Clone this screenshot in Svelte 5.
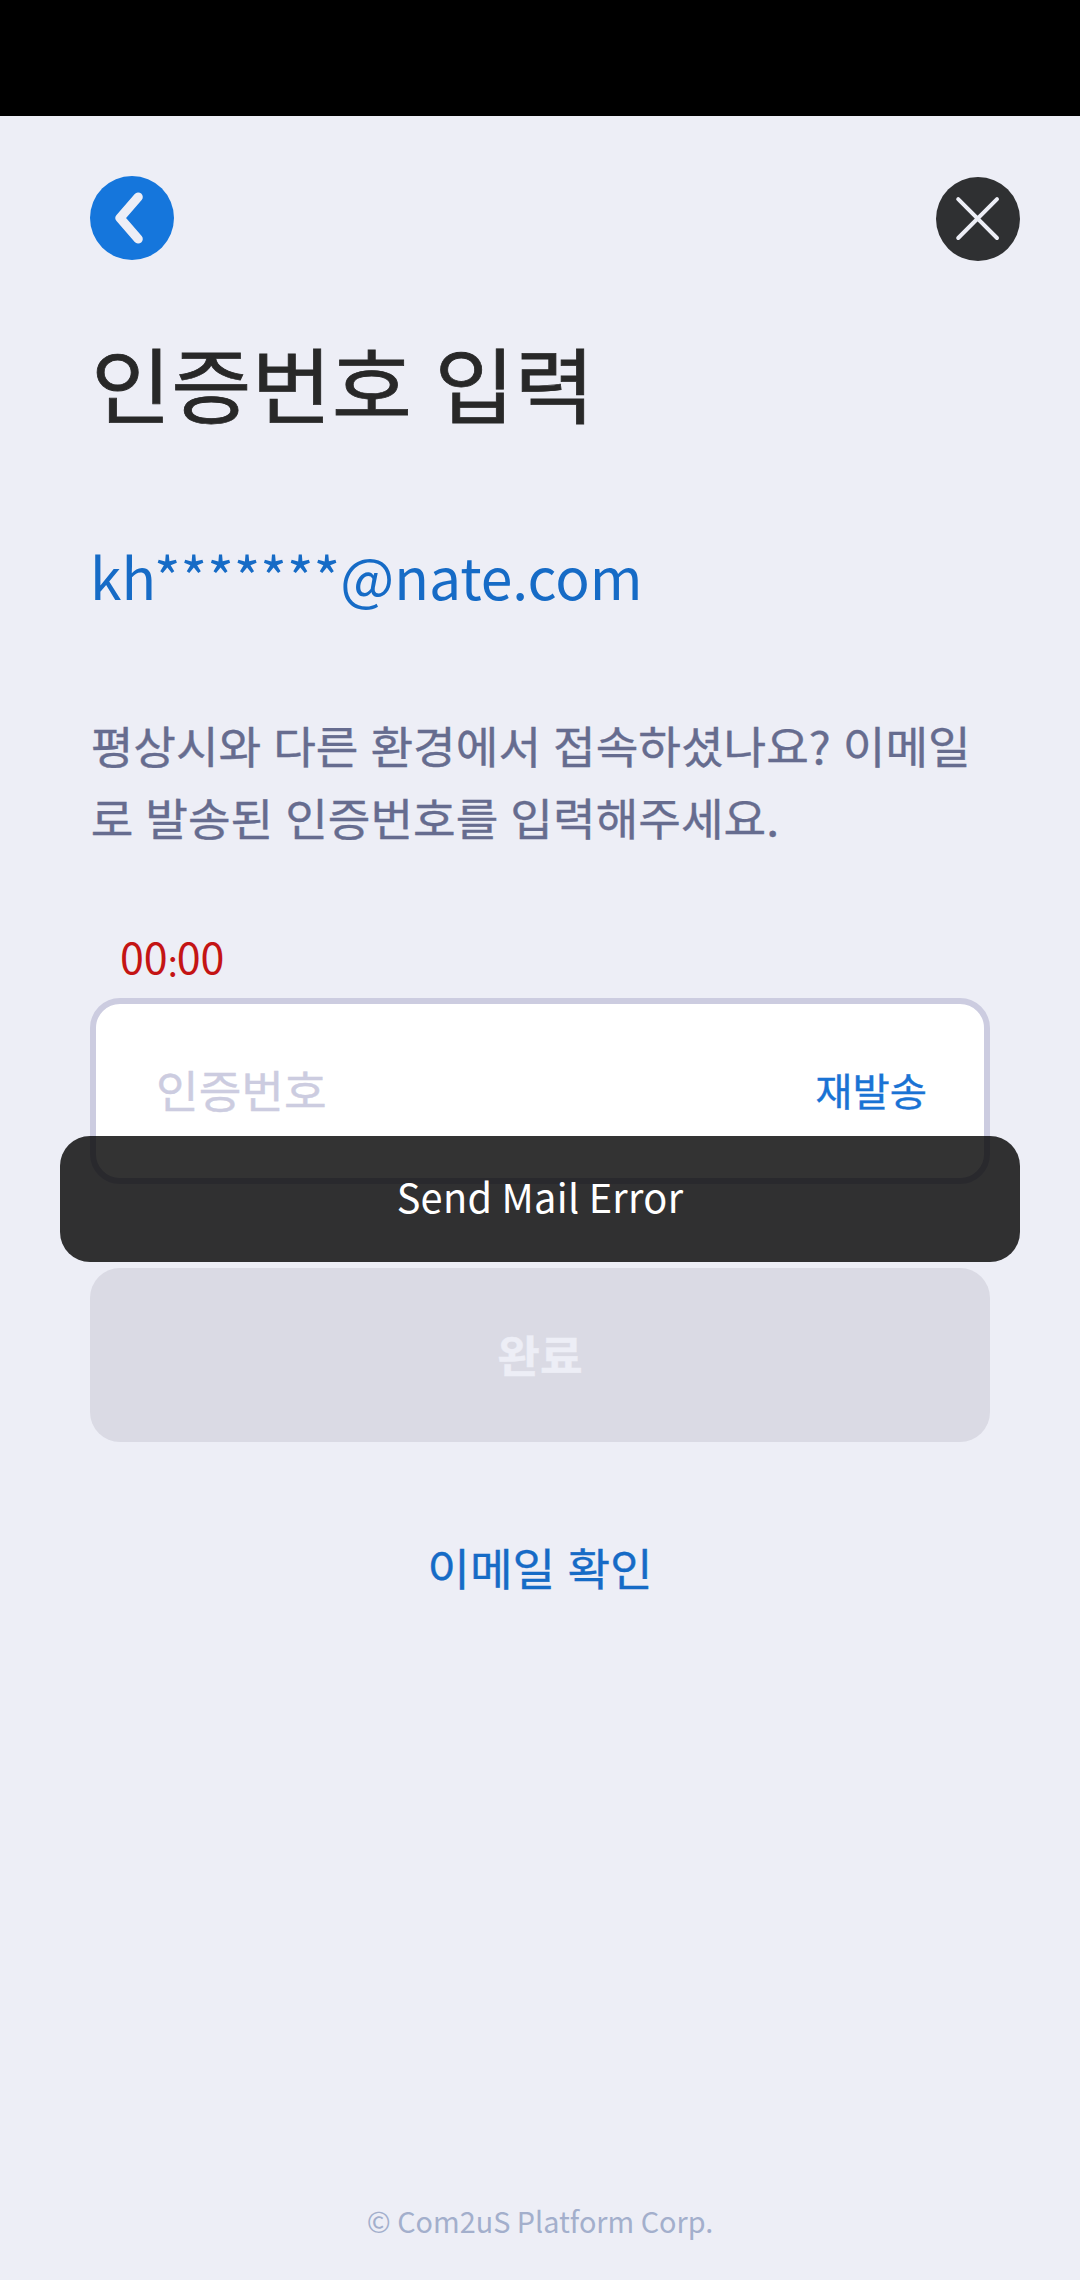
<script lang="ts">
    let email = "kh*******@nate.com";
    let code = "";
    let minutes = "00";
    let seconds = "00";
    let toastMessage = "Send Mail Error";
</script>

<div class="screen">
    <div class="status-bar"></div>

    <header>
        <button class="icon-button" aria-label="back">
            <svg width="84" height="84" viewBox="0 0 84 84">
                <circle cx="42" cy="42" r="42" fill="#1576dc"/>
                <path d="M48.2 21 L30 42 L48.2 63" fill="none" stroke="#edeef6" stroke-width="9.2" stroke-linecap="round" stroke-linejoin="round"/>
            </svg>
        </button>
        <button class="icon-button" aria-label="close">
            <svg width="84" height="84" viewBox="0 0 84 84">
                <circle cx="42" cy="42" r="42" fill="#2f3032"/>
                <path d="M22.2 22.2 L61 61 M61 22.2 L22.2 61" fill="none" stroke="#edeef6" stroke-width="4" stroke-linecap="round"/>
            </svg>
        </button>
    </header>

    <main>
        <h1>인증번호 입력</h1>
        <p class="email">{email}</p>
        <p class="description">평상시와 다른 환경에서 접속하셨나요? 이메일<br/>로 발송된 인증번호를 입력해주세요.</p>

        <div class="timer">{minutes}<span class="colon">:</span>{seconds}</div>
        <div class="field">
            <input type="text" placeholder="인증번호" bind:value={code}/>
            <button class="resend">재발송</button>
            {#if toastMessage}
                <div class="toast">{toastMessage}</div>
            {/if}
        </div>
        <button class="submit" disabled={!code}><span>완료</span></button>
        <button class="check">이메일 확인</button>
    </main>

    <footer>© Com2uS Platform Corp.</footer>
</div>

<style>
    :global(body) {
        background: #edeef6;
    }

    .screen {
        display: flex;
        flex-direction: column;
        width: 1080px;
        height: 2280px;
        overflow: hidden;
        background: #edeef6;
        font-family: "Noto Sans CJK KR", sans-serif;
    }

    button {
        padding: 0;
        border: none;
        background: none;
        font-family: inherit;
    }

    /* hangul is set slightly flatter than the default glyphs */
    h1,
    .description,
    input,
    .resend,
    .submit span,
    .check {
        transform: scaleY(0.955);
        -webkit-text-stroke: 0.4px currentColor;
    }

    .status-bar {
        height: 116px;
        background: #000;
    }

    header {
        display: flex;
        justify-content: space-between;
        padding: 60px 60px 0 90px;
    }

    .icon-button {
        width: 84px;
        height: 84px;
    }

    .icon-button:last-child {
        margin-top: 1px;
    }

    svg {
        display: block;
    }

    main {
        display: flex;
        flex-direction: column;
        flex: 1;
        padding: 0 90px;
    }

    h1 {
        margin: 60px 0 0;
        padding-left: 1px;
        color: #282828;
        font-size: 87.2px;
        font-weight: 400;
        line-height: 120px;
        word-spacing: 3px;
        transform: scaleY(0.944);
        -webkit-text-stroke-width: 0.8px;
    }

    .email {
        margin: 84px 0 0;
        color: #166bc6;
        font-size: 57px;
        line-height: 100px;
    }

    .description {
        margin: 80px 0 0;
        padding-left: 0.7px;
        color: #666c8f;
        font-size: 46.35px;
        line-height: 75.5px;
        word-spacing: 1.6px;
        white-space: nowrap;
    }

    .timer {
        height: 60px;
        margin: 69px 0 0 30px;
        color: #c41414;
        font-size: 43px;
        line-height: 60px;
    }

    .colon {
        display: inline-block;
        width: 9px;
        font-size: 36px;
        line-height: 1;
        vertical-align: -3px;
    }

    .field {
        position: relative;
        display: flex;
        align-items: center;
        box-sizing: border-box;
        height: 186px;
        margin-top: 13px;
        padding: 0 57px 4px 60px;
        border: 6px solid #cccce0;
        border-radius: 30px;
        background: #fff;
    }

    input {
        flex: 1;
        min-width: 0;
        padding: 0 0 2px;
        border: none;
        outline: none;
        background: none;
        color: #282828;
        font-family: inherit;
        font-size: 46.4px;
    }

    input::placeholder {
        color: #cccce0;
        opacity: 1;
    }

    .resend {
        color: #1a73d4;
        font-size: 40.5px;
    }

    .toast {
        position: absolute;
        top: 132px;
        left: -36px;
        right: -36px;
        height: 126px;
        border-radius: 30px;
        background: rgba(0, 0, 0, 0.8);
        color: #fff;
        font-size: 39.7px;
        letter-spacing: 0.3px;
        line-height: 120px;
        text-align: center;
    }

    .submit {
        height: 174px;
        margin-top: 84px;
        padding-bottom: 4px;
        border-radius: 30px;
        background: #dadae4;
        color: #edeef6;
        font-size: 46.35px;
        font-weight: 700;
    }

    .submit span {
        display: inline-block;
    }

    .check {
        align-self: center;
        margin-top: 90px;
        color: #166bc6;
        font-size: 46.35px;
        line-height: 70px;
        word-spacing: 1.8px;
    }

    footer {
        padding-bottom: 31px;
        color: #a3afcc;
        font-size: 28.8px;
        line-height: 56px;
        text-align: center;
    }
</style>
